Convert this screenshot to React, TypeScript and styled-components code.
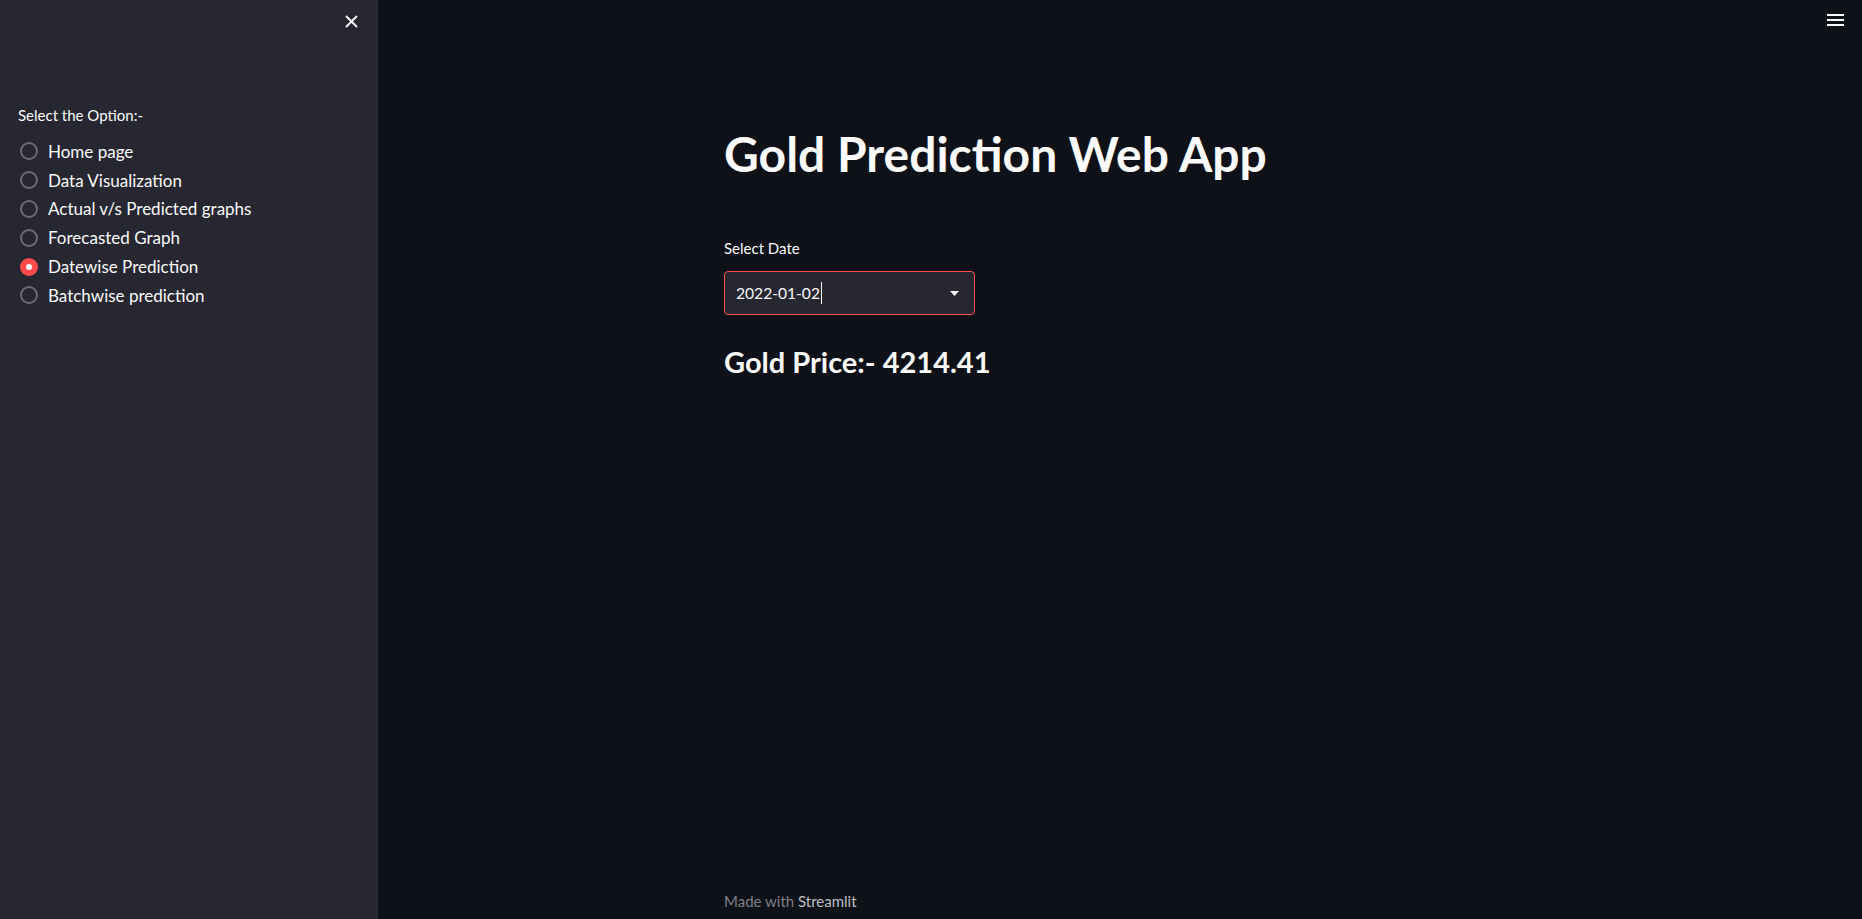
import styled, { createGlobalStyle } from "styled-components";

const GlobalStyle = createGlobalStyle`
  html, body {
    margin: 0;
    padding: 0;
    background: #0e1117;
    font-family: Lato, "Open Sans", sans-serif;
    color: #fafafa;
  }
  * {
    box-sizing: border-box;
  }
`;

const Page = styled.div`
  display: flex;
  height: 919px;
  overflow: hidden;
`;

const Sidebar = styled.aside`
  width: 378px;
  flex-shrink: 0;
  background: #262730;
  display: flex;
  flex-direction: column;
`;

const SidebarTop = styled.div`
  height: 42px;
  display: flex;
  justify-content: flex-end;
  align-items: center;
  padding-right: 18px;
`;

const IconButton = styled.button`
  width: 18px;
  height: 18px;
  padding: 0;
  border: none;
  background: transparent;
  display: flex;
  align-items: center;
  justify-content: center;
  color: #fafafa;
`;

const SidebarBody = styled.div`
  padding: 61px 18px 0;
`;

const WidgetLabel = styled.div`
  font-size: 15px;
  line-height: 24px;
  color: #fafafa;
`;

const RadioGroup = styled.div`
  margin-top: 10px;
  display: flex;
  flex-direction: column;
`;

const RadioRow = styled.label`
  height: 28.8px;
  display: flex;
  align-items: center;
  gap: 10px;
  font-size: 17px;
  color: #fafafa;
`;

interface DotProps {
  checked: boolean;
}

const RadioDot = styled.span<DotProps>`
  width: 18px;
  height: 18px;
  margin-left: 2px;
  border-radius: 50%;
  display: flex;
  align-items: center;
  justify-content: center;
  border: ${(p) => (p.checked ? "none" : "2.5px solid #6c6d74")};
  background: ${(p) => (p.checked ? "#ff4b4b" : "transparent")};

  &::after {
    content: "";
    display: ${(p) => (p.checked ? "block" : "none")};
    width: 6px;
    height: 6px;
    border-radius: 50%;
    background: #fafafa;
  }
`;

const Main = styled.main`
  flex: 1;
  display: flex;
  flex-direction: column;
`;

const Header = styled.header`
  height: 40px;
  display: flex;
  justify-content: flex-end;
  align-items: center;
  padding-right: 18px;
`;

const Column = styled.div`
  flex: 1;
  width: 792px;
  margin: 0 auto;
  display: flex;
  flex-direction: column;
`;

const Title = styled.h1`
  margin: 84px 0 0;
  font-size: 48px;
  line-height: 60px;
  font-weight: 700;
  color: #fafafa;
`;

const DateField = styled.div`
  margin-top: 52px;
  display: flex;
  flex-direction: column;
  gap: 11px;
`;

const InputBox = styled.div`
  width: 251px;
  height: 44px;
  border: 1px solid #ff4b4b;
  border-radius: 4px;
  background: #262730;
  display: flex;
  align-items: center;
  justify-content: space-between;
  padding: 0 15px 0 11px;
`;

const InputText = styled.span`
  font-size: 15.6px;
  color: #fafafa;
  display: flex;
  align-items: center;
`;

const Caret = styled.span`
  display: inline-block;
  width: 1px;
  height: 22px;
  margin-left: 1px;
  background: #fafafa;
`;

const Price = styled.h3`
  margin: 28px 0 0;
  font-size: 29px;
  line-height: 38px;
  font-weight: 700;
  color: #fafafa;
`;

const Footer = styled.footer`
  margin-top: auto;
  padding-bottom: 6px;
  font-size: 15px;
  line-height: 24px;
  color: #7d7f87;
`;

const FooterLink = styled.span`
  color: #bfc0c4;
`;

const options = [
  "Home page",
  "Data Visualization",
  "Actual v/s Predicted graphs",
  "Forecasted Graph",
  "Datewise Prediction",
  "Batchwise prediction",
];

export default function App() {
  const selected = "Datewise Prediction";

  return (
    <>
      <GlobalStyle />
      <Page>
        <Sidebar>
          <SidebarTop>
            <IconButton aria-label="Close sidebar">
              <svg width="13" height="13" viewBox="0 0 13 13">
                <path d="M1 1 L12 12 M12 1 L1 12" stroke="#fafafa" strokeWidth="1.8" />
              </svg>
            </IconButton>
          </SidebarTop>
          <SidebarBody>
            <WidgetLabel>Select the Option:-</WidgetLabel>
            <RadioGroup>
              {options.map((opt) => (
                <RadioRow key={opt}>
                  <RadioDot checked={opt === selected} />
                  {opt}
                </RadioRow>
              ))}
            </RadioGroup>
          </SidebarBody>
        </Sidebar>

        <Main>
          <Header>
            <IconButton aria-label="Menu">
              <svg width="17" height="12" viewBox="0 0 17 12">
                <path d="M0 1 H17 M0 6 H17 M0 11 H17" stroke="#fafafa" strokeWidth="2" />
              </svg>
            </IconButton>
          </Header>
          <Column>
            <Title>Gold Prediction Web App</Title>
            <DateField>
              <WidgetLabel>Select Date</WidgetLabel>
              <InputBox>
                <InputText>
                  2022-01-02
                  <Caret />
                </InputText>
                <svg width="9" height="5" viewBox="0 0 9 5">
                  <path d="M0 0 H9 L4.5 5 Z" fill="#fafafa" />
                </svg>
              </InputBox>
            </DateField>
            <Price>Gold Price:- 4214.41</Price>
            <Footer>
              Made with <FooterLink>Streamlit</FooterLink>
            </Footer>
          </Column>
        </Main>
      </Page>
    </>
  );
}
